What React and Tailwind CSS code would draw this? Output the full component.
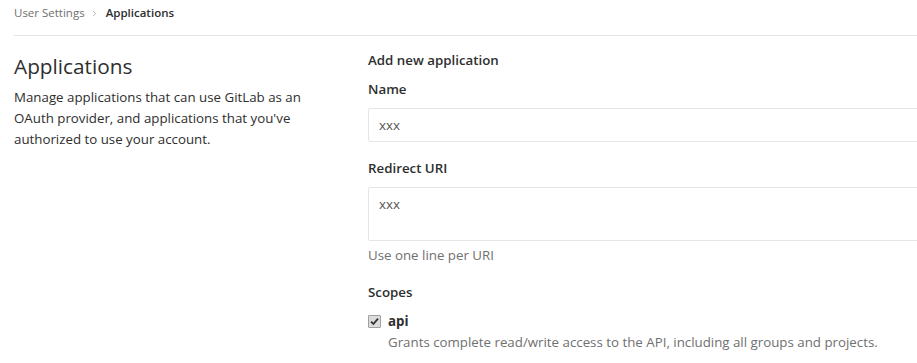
import { ChevronRight } from 'lucide-react';

export default function App() {
  return (
    <div className="w-[917px] h-[363px] overflow-hidden bg-white font-['Open_Sans',sans-serif] text-[13.3px] text-[#2e2e2e]">
      {/* Breadcrumb */}
      <div className="ml-[14px] pt-[3px] pb-[12px] leading-[20px] border-b border-[#e5e5e5] flex items-center text-[11.5px]">
        <span className="text-[#707070]">User Settings</span>
        <ChevronRight size={9} strokeWidth={2} className="ml-[5px] mr-[7px] text-[#999]" />
        <span className="font-semibold text-[#2e2e2e]">Applications</span>
      </div>

      <div className="flex">
        {/* Left column */}
        <div className="w-[368px] shrink-0 pl-[14px] pr-[30px] pt-[16px]">
          <h4 className="text-[20.8px] leading-[28px] font-normal text-[#2e2e2e]">Applications</h4>
          <p className="mt-[7px] leading-[21px] text-[#2e2e2e]">
            Manage applications that can use GitLab as an
            <br />
            OAuth provider, and applications that you've
            <br />
            authorized to use your account.
          </p>
        </div>

        {/* Right column */}
        <div className="w-[600px] shrink-0 pt-[14px]">
          <h5 className="font-semibold leading-[21px]">Add new application</h5>

          <label className="block mt-[8px] font-semibold leading-[21px]">Name</label>
          <input
            readOnly
            value="xxx"
            className="mt-[8px] block w-full h-[34px] px-[10px] border border-[#e5e5e5] rounded-[2px] text-[#555] text-[13.3px] outline-none"
          />

          <label className="block mt-[16px] font-semibold leading-[21px]">Redirect URI</label>
          <textarea
            readOnly
            value="xxx"
            className="mt-[8px] block w-full h-[54px] px-[10px] py-[6px] border border-[#e5e5e5] rounded-[2px] text-[#555] text-[13.3px] leading-[20px] outline-none resize-none"
          />
          <p className="mt-[4px] leading-[21px] text-[#707070]">Use one line per URI</p>

          <label className="block mt-[16px] font-semibold leading-[21px]">Scopes</label>
          <div className="mt-[8px] flex items-center leading-[21px]">
            <span className="w-[13px] h-[13px] border border-[#a0a0a0] bg-[#dcdcdc] rounded-[1px] flex items-center justify-center">
              <svg width="9" height="9" viewBox="0 0 9 9">
                <path d="M1 4.6 L3.4 7 L8 1.6" fill="none" stroke="#333" strokeWidth="1.8" />
              </svg>
            </span>
            <span className="ml-[7px] font-bold">api</span>
          </div>
          <p className="pl-[20px] leading-[21px] text-[#707070]">
            Grants complete read/write access to the API, including all groups and projects.
          </p>
        </div>
      </div>
    </div>
  );
}
